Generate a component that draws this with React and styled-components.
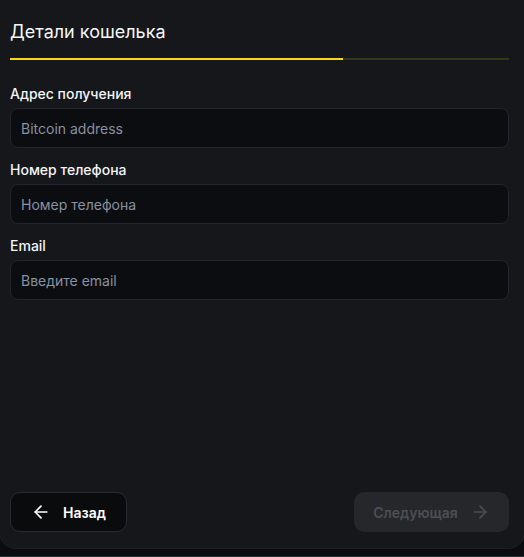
import React from "react";
import styled, { createGlobalStyle } from "styled-components";
import { ArrowLeft, ArrowRight } from "lucide-react";

const Global = createGlobalStyle`
  html, body { margin: 0; padding: 0; background: #0b0c0f; }
  body { font-family: Inter, "Noto Sans", sans-serif; -webkit-font-smoothing: antialiased; }
  * { box-sizing: border-box; }
`;

const Page = styled.div`
  width: 524px;
  height: 557px;
  background: #0b0c0f;
  border-bottom: 1px solid #1c3035;
  overflow: hidden;
`;

const Card = styled.div`
  height: 548px;
  background: #15171b;
  border-radius: 0 0 16px 16px;
  box-shadow: 0 0 0 1px #1b1e23;
  display: flex;
  flex-direction: column;
  padding: 18px 15px 16px 10px;
`;

const Title = styled.h2`
  margin: 0;
  font-size: 18px;
  line-height: 28px;
  font-weight: 400;
  color: #f5f6f7;
`;

const Progress = styled.div`
  margin-top: 12px;
  height: 2px;
  background: #39351a;
  display: flex;
`;

const ProgressFill = styled.div`
  height: 100%;
  background: #fad614;
`;

const Fields = styled.div`
  margin-top: 24px;
  display: flex;
  flex-direction: column;
  gap: 12px;
`;

const Field = styled.label`
  display: flex;
  flex-direction: column;
  gap: 4px;
`;

const Label = styled.span`
  font-size: 14px;
  line-height: 20px;
  font-weight: 500;
  color: #f3f4f6;
`;

const Input = styled.input`
  height: 40px;
  width: 100%;
  background: #0c0d10;
  border: 1px solid #212631;
  border-radius: 8px;
  padding: 0 10px;
  font-family: inherit;
  font-size: 14px;
  color: #e5e7eb;
  outline: none;
  &::placeholder { color: #8791a0; }
`;

const Footer = styled.div`
  margin-top: auto;
  display: flex;
  justify-content: space-between;
  align-items: center;
`;

const Button = styled.button`
  height: 40px;
  display: inline-flex;
  align-items: center;
  justify-content: center;
  gap: 12px;
  border-radius: 10px;
  font-family: inherit;
  font-size: 14px;
  font-weight: 600;
  cursor: pointer;
  border: 1px solid ${(p) => (p.$variant === "ghost" ? "#272c33" : "transparent")};
  background: ${(p) => (p.$variant === "ghost" ? "#0a0b0d" : "#26272b")};
  color: ${(p) => (p.$variant === "ghost" ? "#ffffff" : "#4c4e54")};
  width: ${(p) => p.$width}px;
`;

export default function App() {
  return (
    <>
      <Global />
      <Page>
        <Card>
          <Title>Детали кошелька</Title>
          <Progress>
            <ProgressFill style={{ width: `${(2 / 3) * 100}%` }} />
          </Progress>
          <Fields>
            <Field>
              <Label>Адрес получения</Label>
              <Input placeholder="Bitcoin address" />
            </Field>
            <Field>
              <Label>Номер телефона</Label>
              <Input placeholder="Номер телефона" />
            </Field>
            <Field>
              <Label>Email</Label>
              <Input placeholder="Введите email" />
            </Field>
          </Fields>
          <Footer>
            <Button $variant="ghost" $width={117}>
              <ArrowLeft size={20} strokeWidth={2} />
              Назад
            </Button>
            <Button $variant="disabled" $width={155} disabled>
              Следующая
              <ArrowRight size={20} strokeWidth={2} />
            </Button>
          </Footer>
        </Card>
      </Page>
    </>
  );
}
